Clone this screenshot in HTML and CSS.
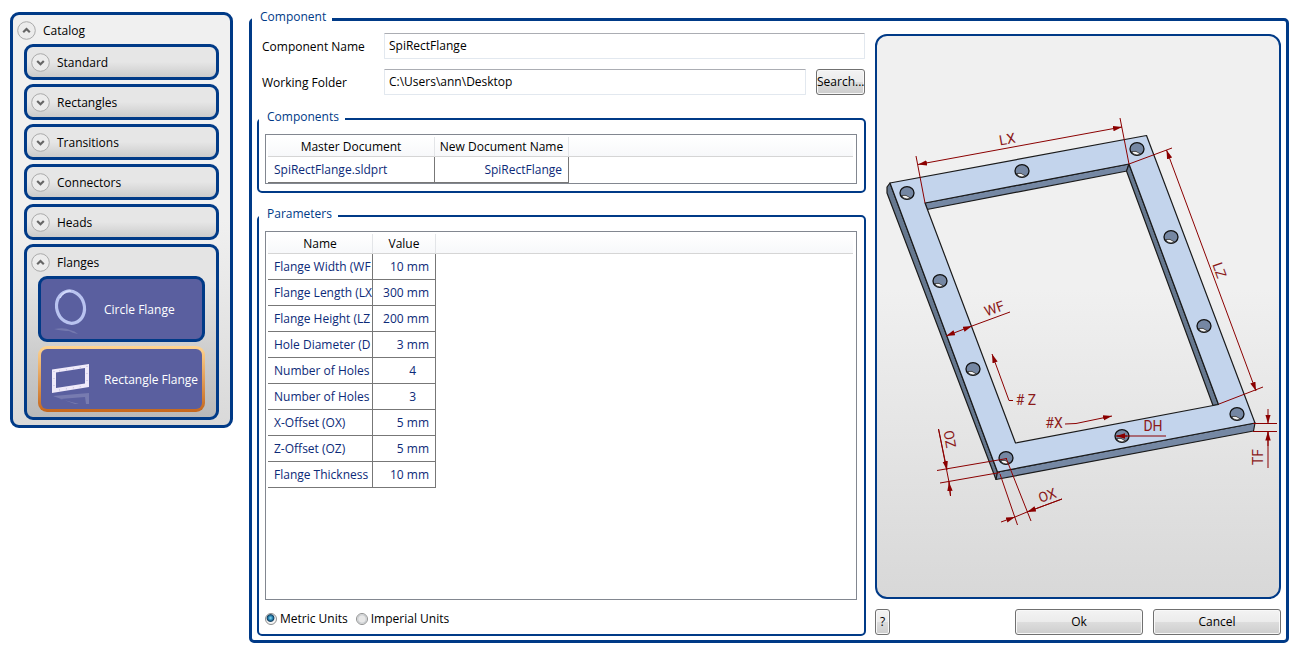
FILE: index.html
```html
<!DOCTYPE html>
<html lang="en">
<head>
    <meta charset="UTF-8">
    <meta name="viewport" content="width=device-width, initial-scale=1.0">
    <title>Component Catalog</title>
    <link rel="stylesheet" href="styles.css">
</head>
<body>
    <nav class="catalog expander open">
        <button type="button" class="expander-header" aria-expanded="true">
            <svg class="chevron" viewBox="0 0 19 19"><circle cx="9.5" cy="9.5" r="8.8"/><path d="M6.2 11.2 9.5 8l3.3 3.2"/></svg>
            Catalog
        </button>
        <div class="expander-body">
            <div class="expander">
                <button type="button" class="expander-header" aria-expanded="false">
                    <svg class="chevron" viewBox="0 0 19 19"><circle cx="9.5" cy="9.5" r="8.8"/><path d="M6.2 8 9.5 11.2 12.8 8"/></svg>
                    Standard
                </button>
            </div>
            <div class="expander">
                <button type="button" class="expander-header" aria-expanded="false">
                    <svg class="chevron" viewBox="0 0 19 19"><circle cx="9.5" cy="9.5" r="8.8"/><path d="M6.2 8 9.5 11.2 12.8 8"/></svg>
                    Rectangles
                </button>
            </div>
            <div class="expander">
                <button type="button" class="expander-header" aria-expanded="false">
                    <svg class="chevron" viewBox="0 0 19 19"><circle cx="9.5" cy="9.5" r="8.8"/><path d="M6.2 8 9.5 11.2 12.8 8"/></svg>
                    Transitions
                </button>
            </div>
            <div class="expander">
                <button type="button" class="expander-header" aria-expanded="false">
                    <svg class="chevron" viewBox="0 0 19 19"><circle cx="9.5" cy="9.5" r="8.8"/><path d="M6.2 8 9.5 11.2 12.8 8"/></svg>
                    Connectors
                </button>
            </div>
            <div class="expander">
                <button type="button" class="expander-header" aria-expanded="false">
                    <svg class="chevron" viewBox="0 0 19 19"><circle cx="9.5" cy="9.5" r="8.8"/><path d="M6.2 8 9.5 11.2 12.8 8"/></svg>
                    Heads
                </button>
            </div>
            <div class="expander open">
                <button type="button" class="expander-header" aria-expanded="true">
                    <svg class="chevron" viewBox="0 0 19 19"><circle cx="9.5" cy="9.5" r="8.8"/><path d="M6.2 11.2 9.5 8l3.3 3.2"/></svg>
                    Flanges
                </button>
                <div class="expander-body">
                    <button type="button" class="tile">
                        <svg class="tile-icon" viewBox="0 0 44 52">
                            <ellipse cx="21.500" cy="23" rx="13.8" ry="16.3" transform="rotate(-16 22 23)" fill="none" stroke="#b9c3f0" stroke-width="3.2"/>
                            <path d="M11 14q4-8 11-7" fill="none" stroke="#d5dcfb" stroke-width="1.5"/>
                            <path d="M5 45q11-2 16 1 5 1 8 4-6-1-9-3-6 0-15-2z" fill="#7378ae"/>
                        </svg>
                        Circle Flange
                    </button>
                    <button type="button" class="tile selected" aria-pressed="true">
                        <svg class="tile-icon" viewBox="0 0 44 52">
                            <path fill="#efeafa" fill-rule="evenodd" d="M3 15.500 40 10v23L3 39zM7 18.500V34l29-4.500V14z"/>
                            <path d="M5 17v19M38 12v19M10 17l26-4M10 36l26-4" stroke="#aaa5cc" stroke-width=".7" stroke-dasharray="1 6" fill="none"/>
                            <path fill="#777bb0" d="M4 42 40 39v11h-3l-1-7-25 2 19 5h-4z"/>
                        </svg>
                        Rectangle Flange
                    </button>
                </div>
            </div>
        </div>
    </nav>

    <fieldset class="group component">
        <legend>Component</legend>
        <div class="component-layout">
            <div class="details">
                <div class="field">
                    <label for="componentName">Component Name</label>
                    <input type="text" id="componentName" value="SpiRectFlange">
                </div>
                <div class="field">
                    <label for="workingFolder">Working Folder</label>
                    <input type="text" id="workingFolder" value="C:\Users\ann\Desktop">
                    <button type="button" class="btn btn-search">Search...</button>
                </div>

                <fieldset class="group">
                    <legend>Components</legend>
                    <div class="list">
                        <table>
                            <colgroup><col class="col-master"><col class="col-new"><col></colgroup>
                            <thead>
                                <tr><th>Master Document</th><th>New Document Name</th><th></th></tr>
                            </thead>
                            <tbody>
                                <tr><td>SpiRectFlange.sldprt</td><td class="value">SpiRectFlange</td></tr>
                            </tbody>
                        </table>
                    </div>
                </fieldset>

                <fieldset class="group parameters">
                    <legend>Parameters</legend>
                    <div class="list">
                        <table>
                            <colgroup><col class="col-name"><col class="col-value"><col></colgroup>
                            <thead>
                                <tr><th>Name</th><th>Value</th><th></th></tr>
                            </thead>
                            <tbody>
                                <tr><td class="name">Flange Width (WF</td><td class="value">10 mm</td></tr>
                                <tr><td class="name">Flange Length (LX</td><td class="value">300 mm</td></tr>
                                <tr><td class="name">Flange Height (LZ</td><td class="value">200 mm</td></tr>
                                <tr><td class="name">Hole Diameter (D</td><td class="value">3 mm</td></tr>
                                <tr><td class="name">Number of Holes</td><td class="value count">4</td></tr>
                                <tr><td class="name">Number of Holes</td><td class="value count">3</td></tr>
                                <tr><td class="name">X-Offset (OX)</td><td class="value">5 mm</td></tr>
                                <tr><td class="name">Z-Offset (OZ)</td><td class="value">5 mm</td></tr>
                                <tr><td class="name">Flange Thickness</td><td class="value">10 mm</td></tr>
                            </tbody>
                        </table>
                    </div>
                    <div class="units">
                        <input type="radio" id="metric" name="units" checked>
                        <label for="metric">Metric Units</label>
                        <input type="radio" id="imperial" name="units">
                        <label for="imperial">Imperial Units</label>
                    </div>
                </fieldset>
            </div>

            <div class="side">
                <div class="preview">
                    <svg class="drawing" viewBox="877 36 402 561" role="img" aria-label="Rectangle flange dimensions">
                        <defs>
                            <marker id="arrow" viewBox="0 0 9 6" refX="9" refY="3" markerWidth="9" markerHeight="6" markerUnits="userSpaceOnUse" orient="auto-start-reverse">
                                <path d="M9 3 0 .3v5.400z" fill="#8b0000"/>
                            </marker>
                            <g id="hole">
                                <ellipse rx="7" ry="6.300" fill="#7587a3" stroke="#111" stroke-width="1.300"/>
                                <path d="M-5.500 2.500Q-1 1 3.500 5 0 7-3.500 5z" fill="#f4f4f4" stroke="#222" stroke-width=".8"/>
                            </g>
                        </defs>

                        <!-- plate: outer edge, inner walls, top face -->
                        <g stroke="#1a1a1a" stroke-width="1.200" stroke-linejoin="round">
                            <path fill="#66788f" d="M890 183 887 187v6L996 479.500l1.500-7.500z"/>
                            <path fill="#7588a4" d="M997.500 472 996 479.500 1253.500 431l1.500-8z"/>
                            <path fill="#7588a4" d="M925 203l2 6.500L1127 171l2-7z"/>
                            <path fill="#66788f" d="M1129 164l-2.500 7L1213 405.500l5.500-1z"/>
                            <path fill="#c3d4ec" fill-rule="evenodd" d="M890 183 1146.500 135.500 1255 423 997.500 472zM925 203l90.500 240L1218.500 404.500 1129 164z"/>
                        </g>

                        <use href="#hole" x="907" y="193"/>
                        <use href="#hole" x="1022" y="171"/>
                        <use href="#hole" x="1137" y="149"/>
                        <use href="#hole" x="940" y="281"/>
                        <use href="#hole" x="973" y="369"/>
                        <use href="#hole" x="1006" y="458"/>
                        <use href="#hole" x="1171" y="237"/>
                        <use href="#hole" x="1204" y="326"/>
                        <use href="#hole" x="1237" y="414"/>
                        <use href="#hole" x="1122" y="436"/>

                        <g class="dimension">
                            <path d="M916 156l9 47M1120 118l9 46M1129 164l43-16M1219 404l44-17"/>
                            <path d="M1253 423.500h24M1253 431.500h24"/>
                            <path d="M937 470.500 1007 458.500M940 483l60-10.500M1000 474l17.500 51M1006 458l25 63"/>
                            <path d="M972 326l38-14M1268 468v-37M950.500 496 949 482M1062 499l-35 13M938.500 429l10.500 53M1015 517l12-5"/>
                            <path d="M1117 436h49"/>
                            <path marker-start="url(#arrow)" marker-end="url(#arrow)" d="M918 164.500 1122 127"/>
                            <path marker-start="url(#arrow)" marker-end="url(#arrow)" d="M1166.500 150 1256 391"/>
                            <path marker-start="url(#arrow)" marker-end="url(#arrow)" d="M946 336l26-10"/>
                            <path marker-end="url(#arrow)" d="M1013 400.500h-4L992 354"/>
                            <path marker-end="url(#arrow)" d="M1065 424l11-.5 36-7.500"/>
                            <path marker-end="url(#arrow)" d="M1127 436h-11"/>
                            <path marker-end="url(#arrow)" d="M1268 409v14.500"/>
                            <path marker-end="url(#arrow)" d="M1268 446v-14.500"/>
                            <path marker-end="url(#arrow)" d="M938.500 429l8.500 41"/>
                            <path marker-end="url(#arrow)" d="M950.500 496 949 482"/>
                            <path marker-end="url(#arrow)" d="M1001 522l14-5"/>
                            <path marker-end="url(#arrow)" d="M1062 499l-35 13"/>
                        </g>

                        <g class="dimension-text">
                            <text transform="translate(1008 144) rotate(-10)">LX</text>
                            <text transform="translate(1215 272) rotate(70)">LZ</text>
                            <text transform="translate(996 313) rotate(-20)">WF</text>
                            <text x="1026" y="405"># Z</text>
                            <text x="1054" y="428">#X</text>
                            <text x="1153" y="431">DH</text>
                            <text transform="translate(1263 457) rotate(-90)">TF</text>
                            <text transform="translate(945 440) rotate(80)">OZ</text>
                            <text transform="translate(1049 500) rotate(-20)">OX</text>
                        </g>
                    </svg>
                </div>
                <div class="actions">
                    <button type="button" class="btn btn-help">?</button>
                    <button type="button" class="btn btn-action">Ok</button>
                    <button type="button" class="btn btn-action">Cancel</button>
                </div>
            </div>
        </div>
    </fieldset>
</body>
</html>
```
FILE: styles.css
```css
* {
    margin: 0;
    padding: 0;
    box-sizing: border-box;
}

body {
    display: flex;
    gap: 16px;
    align-items: flex-start;
    min-height: 100vh;
    padding: 9px 4px 11px 10px;
    background: #fff;
    color: #000;
    font-family: 'Segoe UI', 'Open Sans', 'Noto Sans', sans-serif;
    font-size: 12px;
    line-height: 16px;
}

button, input {
    font: inherit;
    color: inherit;
}

/* Catalog */
.expander {
    border: 3px solid #003a87;
    border-radius: 9px;
    padding-bottom: 1px;
    background: linear-gradient(#e6e6e6 50%, #cbcbcb);
}

.expander.open {
    padding-bottom: 5px;
    background: linear-gradient(#e4e4e4 20%, #b9b9b9);
}

.catalog.expander {
    flex: none;
    width: 223px;
    margin-top: 3px;
    background: linear-gradient(#f0f0f0 50%, #d9d9d9);
}

.expander-header {
    display: flex;
    align-items: center;
    gap: 7px;
    width: 100%;
    height: 29px;
    padding: 2px 4px 0;
    border: none;
    background: none;
    cursor: pointer;
}

.chevron {
    width: 19px;
    height: 19px;
    fill: none;
    stroke: #666;
    stroke-width: 2.2;
}

.chevron circle {
    fill: #ececec;
    stroke: #aaa;
    stroke-width: 1;
}

.expander-body {
    display: flex;
    flex-direction: column;
    gap: 4px;
    padding: 0 11px;
}

.tile {
    display: flex;
    align-items: center;
    gap: 11px;
    height: 66px;
    padding: 2px 0 0 8px;
    border: 3px solid #003a87;
    border-radius: 9px;
    background: #5a5f9f;
    color: #fff;
    white-space: nowrap;
    cursor: pointer;
}

.tile.selected {
    border-color: transparent;
    background: linear-gradient(#5a5f9f, #5a5f9f) padding-box, linear-gradient(#ffd591, #c4661c) border-box;
}

.tile-icon {
    flex: none;
    width: 44px;
    height: 52px;
}

/* Group boxes */
.group {
    min-width: 0;
    padding: 5px 7px 7px 6px;
    border: 2px solid #003a87;
    border-radius: 5px;
}

.group legend {
    margin-left: -6px;
    padding: 0 6px 4px 8px;
    color: #003a87;
}

.component {
    flex: 1;
    align-self: stretch;
    display: flex;
    padding: 3px 5px 4px;
    border-width: 3px;
}

.component > legend {
    margin-left: -5px;
    padding-bottom: 5px;
}

.component-layout {
    flex: 1;
    display: grid;
    grid-template-columns: 3fr 2fr;
    gap: 9px;
    height: 100%;
}

.details {
    display: flex;
    flex-direction: column;
    min-width: 0;
}

.field {
    display: flex;
    gap: 10px;
    margin-bottom: 10px;
    padding: 0 1px 0 5px;
}

.field label {
    width: 112px;
    padding-top: 6px;
}

.field input {
    flex: 1;
    min-width: 0;
    height: 26px;
    padding: 0 4px 2px;
    border: 1px solid #e2e8ef;
    border-top-color: #abadb3;
    border-radius: 1px;
}

.details .group {
    margin-top: 4px;
}

.details .parameters {
    flex: 1;
    display: flex;
    flex-direction: column;
    margin-top: 13px;
}

/* Lists */
.list {
    padding: 2px 3px 0 2px;
    border: 1px solid #828790;
}

.parameters .list {
    flex: 1;
}

.list table {
    width: 100%;
    table-layout: fixed;
    border-collapse: separate;
    border-spacing: 0;
}

.col-master { width: 167px; }
.col-new { width: 134px; }
.col-name { width: 105px; }
.col-value { width: 63px; }

.list th {
    height: 20px;
    border-right: 1px solid #e3e5e8;
    border-bottom: 1px solid #d5d5d5;
    background: linear-gradient(#fff, #f7f8fa);
    font-weight: normal;
    white-space: nowrap;
}

.list th:last-child {
    border-right: none;
}

.list td {
    height: 26px;
    border-right: 1px solid #777;
    border-bottom: 1px solid #777;
    padding: 0 6px;
    color: #0c2a78;
    white-space: nowrap;
}

.list .name {
    padding-right: 0;
    overflow: hidden;
}

.list .value {
    text-align: right;
}

.list .count {
    padding-right: 19px;
}

.units {
    display: flex;
    align-items: center;
    padding-top: 11px;
}

.units input {
    appearance: none;
    width: 12px;
    height: 12px;
    margin-right: 3px;
    border: 1px solid #8e8f8f;
    border-radius: 50%;
    background: radial-gradient(circle, #e8e8e8 45%, #c4c8cc 60%, #f4f4f4 70%);
}

.units input:checked {
    background: radial-gradient(circle at 45% 40%, #8fdcf5 0, #2a86b4 25%, #123f61 42%, #f4f4f4 54%);
}

.units label {
    margin-right: 8px;
}

/* Preview */
.side {
    display: flex;
    flex-direction: column;
    gap: 10px;
    padding: 1px 0;
    min-width: 0;
}

.preview {
    flex: 1;
    display: flex;
    min-height: 0;
    border: 2px solid #003a87;
    border-radius: 12px;
    background: linear-gradient(#f0f0f0 45%, #d8d8d8);
}

.drawing {
    flex: 1;
    width: 100%;
}

.dimension {
    fill: none;
    stroke: #8b0000;
    stroke-width: 1;
}

.dimension-text {
    fill: #8b1a1a;
    font-family: Roboto, 'Liberation Sans', sans-serif;
    font-size: 14px;
    text-anchor: middle;
}

/* Buttons */
.btn {
    height: 26px;
    border: 1px solid #707070;
    border-radius: 3px;
    background: linear-gradient(#f3f3f3, #ebebeb 50%, #dddddd 50%, #cdcdcd);
    box-shadow: inset 0 0 0 1px #f8f8f8;
    cursor: pointer;
}

.btn-search {
    width: 49px;
    white-space: nowrap;
}

.actions {
    display: flex;
    gap: 10px;
}

.btn-help {
    width: 15px;
    margin-right: auto;
}

.btn-action {
    width: 128px;
}
```
